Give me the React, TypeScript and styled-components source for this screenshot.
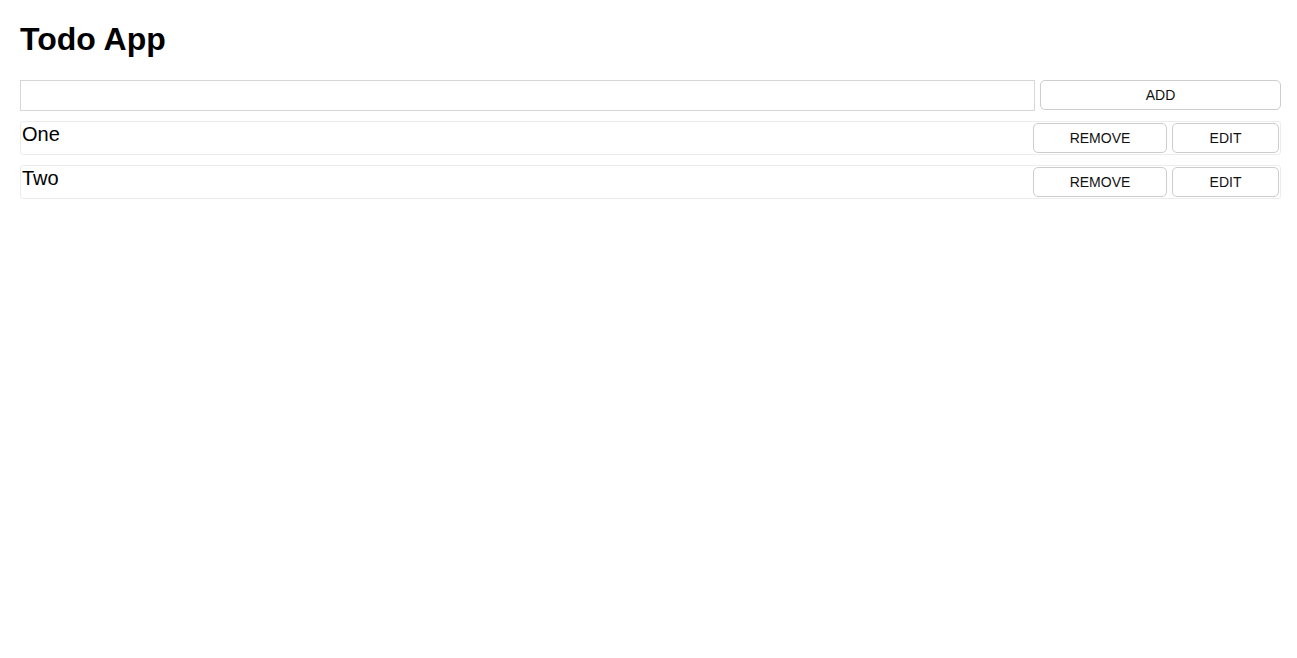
import React, { useState } from "react";
import styled, { createGlobalStyle } from "styled-components";

const Global = createGlobalStyle`
  html, body { margin: 0; padding: 0; background: #fff; }
  body { font-family: "Liberation Sans", Arial, Helvetica, sans-serif; color: #000; }
`;

const Page = styled.div`
  padding: 21px 16px 20px 20px;
`;

const Title = styled.h1`
  margin: 0 0 22px;
  font-size: 32px;
  font-weight: 700;
  line-height: 37px;
`;

const Form = styled.form`
  display: flex;
  gap: 5px;
  align-items: flex-start;
  margin-bottom: 10px;
`;

const Input = styled.input`
  flex: 1;
  height: 31px;
  box-sizing: border-box;
  border: 1px solid #d6d6d6;
  border-radius: 0;
  padding: 0 6px;
  font-size: 16px;
  font-family: inherit;
  outline: none;
`;

const Button = styled.button<{ $w: number }>`
  width: ${(p) => p.$w}px;
  height: 30px;
  box-sizing: border-box;
  border: 1px solid #cdcdcd;
  border-radius: 5px;
  background: #fff;
  color: #111;
  font-family: "Liberation Sans", Arial, sans-serif;
  font-size: 14px;
  padding: 0;
  cursor: pointer;
  flex: none;
`;

const List = styled.div`
  display: flex;
  flex-direction: column;
  gap: 10px;
`;

const Row = styled.div`
  display: flex;
  align-items: flex-start;
  justify-content: space-between;
  border: 1px solid #ececec;
  border-radius: 3px;
  padding: 1px;
`;

const ItemText = styled.span`
  font-size: 20px;
  line-height: 23px;
`;

const Actions = styled.div`
  display: flex;
  gap: 5px;
`;

export default function App() {
  const [items] = useState(["One", "Two"]);
  return (
    <Page>
      <Global />
      <Title>Todo App</Title>
      <Form onSubmit={(e) => e.preventDefault()}>
        <Input type="text" />
        <Button $w={241} type="submit">ADD</Button>
      </Form>
      <List>
        {items.map((it) => (
          <Row key={it}>
            <ItemText>{it}</ItemText>
            <Actions>
              <Button $w={134} type="button">REMOVE</Button>
              <Button $w={107} type="button">EDIT</Button>
            </Actions>
          </Row>
        ))}
      </List>
    </Page>
  );
}
